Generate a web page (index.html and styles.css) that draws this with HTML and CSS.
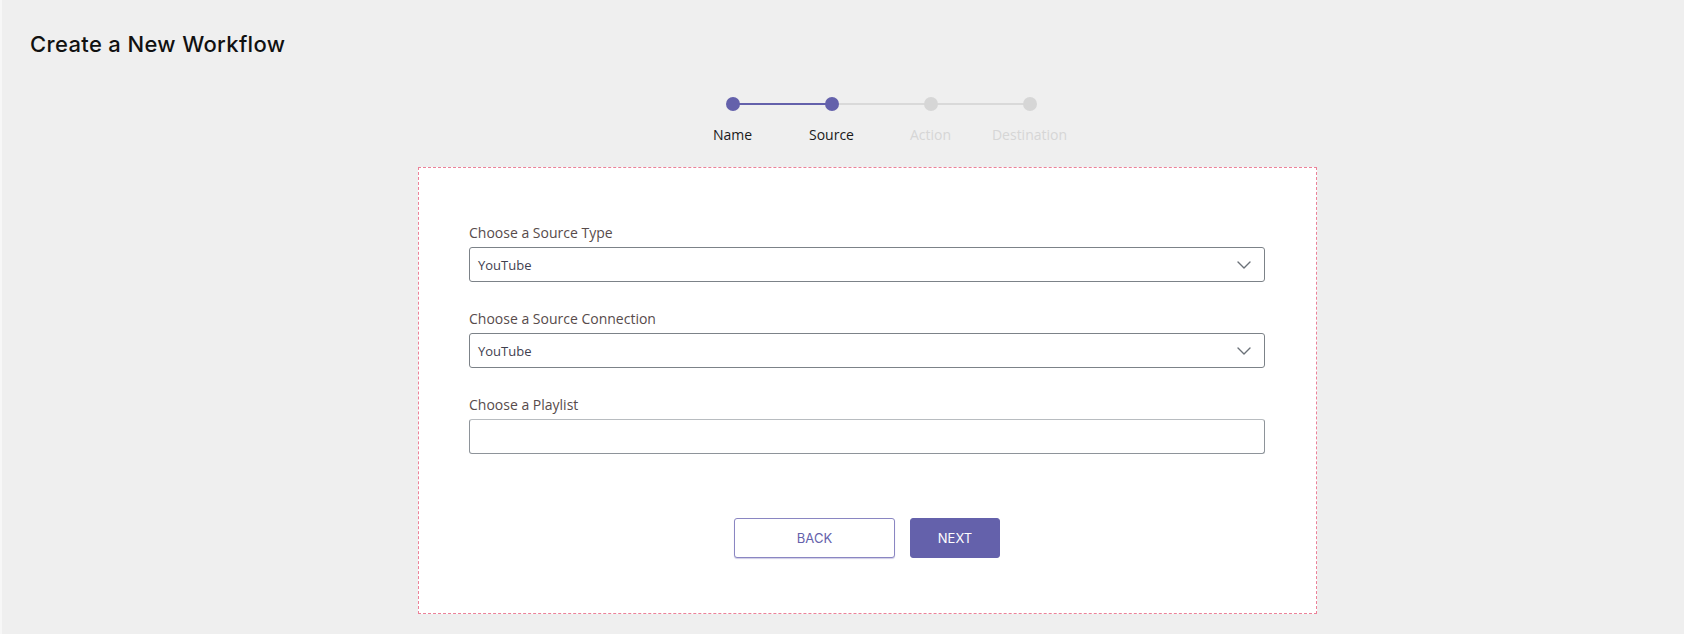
FILE: index.html
```html
<!DOCTYPE html>
<html lang="en">
<head>
    <meta charset="UTF-8">
    <meta name="viewport" content="width=device-width, initial-scale=1.0">
    <title>Create a New Workflow</title>
    <link rel="stylesheet" href="styles.css">
</head>
<body>

    <header class="page-header">
        <h1>Create a New Workflow</h1>
    </header>

    <main>
        <!-- Stepper -->
        <div class="stepper-wrap">
            <ol class="stepper">
                <li class="step done"><span class="dot"></span><span class="step-label">Name</span></li>
                <li class="step current"><span class="dot"></span><span class="step-label">Source</span></li>
                <li class="step"><span class="dot"></span><span class="step-label">Action</span></li>
                <li class="step last"><span class="dot"></span><span class="step-label">Destination</span></li>
            </ol>
        </div>

        <!-- Source form -->
        <section class="card">
            <div class="field">
                <label for="sourceType">Choose a Source Type</label>
                <div class="select">
                    <span class="select-value">YouTube</span>
                    <svg class="chevron" width="14" height="8" viewBox="0 0 14 8"><path d="M1 1l6 6 6-6" fill="none" stroke="#6b7178" stroke-width="1.4" stroke-linecap="round" stroke-linejoin="round"/></svg>
                </div>
            </div>

            <div class="field">
                <label for="sourceConn">Choose a Source Connection</label>
                <div class="select">
                    <span class="select-value">YouTube</span>
                    <svg class="chevron" width="14" height="8" viewBox="0 0 14 8"><path d="M1 1l6 6 6-6" fill="none" stroke="#6b7178" stroke-width="1.4" stroke-linecap="round" stroke-linejoin="round"/></svg>
                </div>
            </div>

            <div class="field">
                <label for="playlist">Choose a Playlist</label>
                <input type="text" id="playlist" class="text-input">
            </div>

            <div class="actions">
                <button class="btn btn-outline">BACK</button>
                <button class="btn btn-primary">NEXT</button>
            </div>
        </section>
    </main>

</body>
</html>
```

FILE: styles.css
```css
* {
    margin: 0;
    padding: 0;
    box-sizing: border-box;
}

body {
    font-family: "Open Sans", "Noto Sans", sans-serif;
    background-color: #efefef;
    color: #222;
    border-left: 2px solid #f7f7f7;
    min-height: 634px;
}

.page-header {
    padding: 29px 0 0 28px;
}

.page-header h1 {
    font-family: Inter, "Noto Sans", sans-serif;
    font-size: 22px;
    font-weight: 500;
    letter-spacing: 0.35px;
    line-height: 30px;
    color: #111;
}

/* stepper */
.stepper-wrap {
    display: flex;
    justify-content: center;
    padding-left: 76px;
    margin-top: 38px;
}

.stepper {
    list-style: none;
    display: flex;
}

.step {
    width: 99px;
    display: flex;
    flex-direction: column;
    align-items: center;
    position: relative;
}

.step::after {
    content: "";
    position: absolute;
    top: 6px;
    left: 50%;
    width: 99px;
    height: 2px;
    background: #d9d9d9;
}

.step.done::after {
    background: #6461ab;
}

.step.last::after {
    display: none;
}

.dot {
    width: 14px;
    height: 14px;
    border-radius: 50%;
    background: #d6d6d6;
    position: relative;
    z-index: 1;
}

.step.done .dot,
.step.current .dot {
    background: #6461ab;
}

.step-label {
    margin-top: 14px;
    font-size: 14px;
    line-height: 19px;
    color: #d6d6d6;
}

.step.done .step-label,
.step.current .step-label {
    color: #1a1a1a;
}

/* card */
.card {
    margin: 23px 367px 0 416px;
    background: #fff;
    border: 1px dashed #ec8299;
    padding: 55px 51px 55px 50px;
    display: flex;
    flex-direction: column;
    gap: 27px;
}

.field label {
    display: block;
    font-size: 14px;
    line-height: 19px;
    color: #574b4b;
    margin-bottom: 5px;
}

.select {
    height: 35px;
    border: 1px solid #7c8288;
    border-radius: 3px;
    display: flex;
    align-items: center;
    justify-content: space-between;
    padding: 0 13px 0 8px;
}

.select-value {
    font-size: 13px;
    color: #3f4150;
}

.chevron {
    margin-top: 1px;
}

.text-input {
    width: 100%;
    height: 35px;
    border: 1px solid #8e949a;
    border-top-color: #b8bcc0;
    border-radius: 3px;
    background: #fff;
    font-family: inherit;
    font-size: 13px;
    padding: 0 8px;
}

.actions {
    display: flex;
    justify-content: center;
    gap: 15px;
    margin-top: 37px;
}

.btn {
    height: 40px;
    border-radius: 3px;
    font-family: Inter, "Noto Sans", sans-serif;
    font-size: 13px;
    cursor: pointer;
}

.btn-outline {
    width: 161px;
    background: #fff;
    border: 1px solid #8a86c2;
    color: #6461ab;
    box-shadow: 0 1px 1px #cfcde6;
}

.btn-primary {
    width: 90px;
    background: #6461ab;
    border: 1px solid #6461ab;
    color: #fff;
}
```
